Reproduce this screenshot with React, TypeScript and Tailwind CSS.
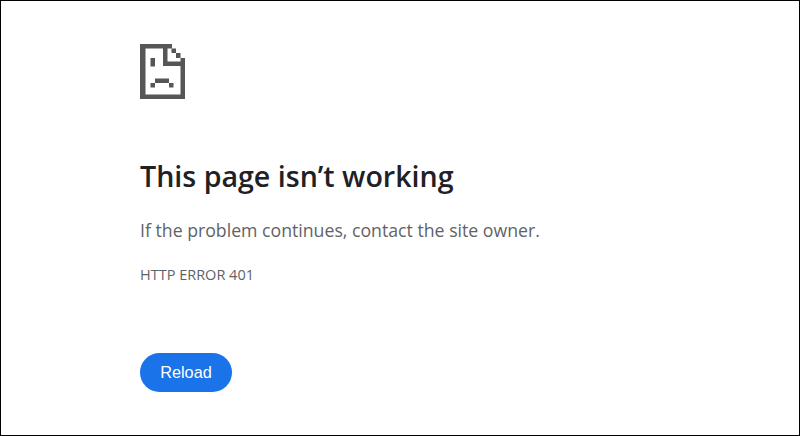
const SadPage = () => (
  <svg width="45" height="55" viewBox="0 0 45 55" fill="#565656">
    <path d="M0 0H32V4.5H27.5V17.5H40.5V14H45V55H0ZM5.5 4.5V50.5H40.5V22H23V4.5Z" fillRule="evenodd" />
    <rect x="31.5" y="4.5" width="4.5" height="4.5" />
    <rect x="36" y="9" width="4.5" height="5" />
    <rect x="10.5" y="14" width="4.5" height="8.5" />
    <rect x="15" y="34.5" width="14" height="4.5" />
    <rect x="10.5" y="39" width="4.5" height="4.5" />
    <rect x="29" y="39" width="4.5" height="4.5" />
  </svg>
);

const App = () => {
  return (
    <div className="w-[800px] h-[436px] bg-white border border-black pl-[139px] pt-[43px] font-['Open_Sans','Noto_Sans',sans-serif] overflow-hidden">
      <SadPage />
      <h1 className="mt-[59px] text-[28.6px] leading-[36px] font-semibold text-[#202124]">
        This page isn’t working
      </h1>
      <p className="mt-[24px] text-[17.7px] leading-[24px] text-[#5f6368]">
        If the problem continues, contact the site owner.
      </p>
      <p className="mt-[23px] text-[14.5px] leading-[20px] text-[#5f6368]">HTTP ERROR 401</p>
      <button className="mt-[68px] block w-[92px] h-[39px] rounded-full bg-[#1a73e8] text-white text-[16.3px] font-['Liberation_Sans',Arial,sans-serif]">
        Reload
      </button>
    </div>
  );
};

export default App;
